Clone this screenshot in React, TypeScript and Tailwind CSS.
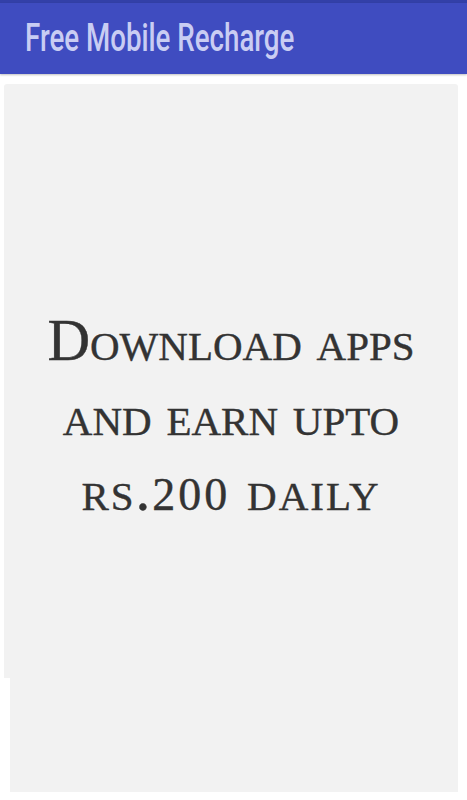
import React from "react";

const App = () => {
  return (
    <div className="w-[467px] h-[800px] bg-white overflow-hidden">
      <div className="h-[3px] bg-[#3340a8]" />
      <div className="h-[71px] bg-[#3f4cc0] flex items-center pl-[25px] shadow-[0_1px_2px_rgba(0,0,0,0.25)]">
        <span
          className="text-[39px] font-medium text-[#c9cdf3] origin-left scale-x-[0.71] whitespace-nowrap"
          style={{ fontFamily: "Roboto, 'Liberation Sans', sans-serif" }}
        >
          Free Mobile Recharge
        </span>
      </div>
      <div className="flex flex-col pt-[10px]">
        <div className="ml-[4px] mr-[9px] h-[594px] bg-[#f2f2f2] rounded-t-[3px] flex flex-col items-center pt-[219px]">
          <p
            className="text-center text-[#333] text-[59px] leading-[75px] [font-variant:small-caps] [-webkit-text-stroke:0.4px_#333]"
            style={{ fontFamily: "'Liberation Serif', 'DejaVu Serif', serif" }}
          >
            Download apps
            <br />
            and earn upto
            <br />
            <span className="tracking-[2px]">
              rs.<span className="text-[46px] tracking-[3px]">200</span> daily
            </span>
          </p>
        </div>
        <div className="ml-[10px] mr-[9px] h-[114px] bg-[#f2f2f2]" />
      </div>
    </div>
  );
};

export default App;
